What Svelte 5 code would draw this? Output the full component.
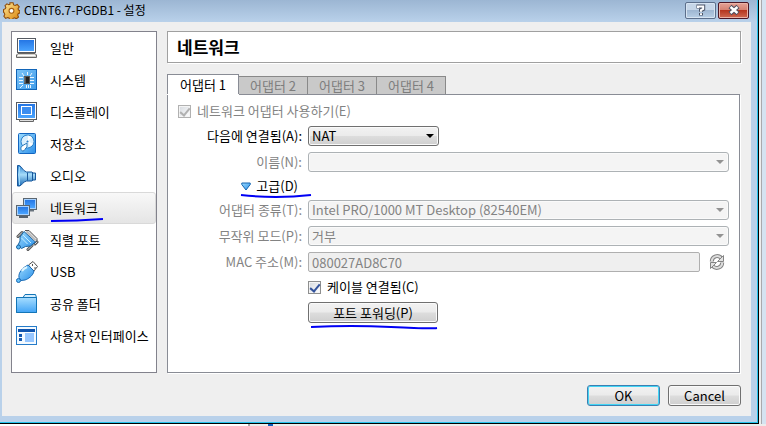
<script>
  const sections = [
    ['display', '일반'],
    ['chip', '시스템'],
    ['screen', '디스플레이'],
    ['disk', '저장소'],
    ['audio', '오디오'],
    ['network', '네트워크'],
    ['serial', '직렬 포트'],
    ['usb', 'USB'],
    ['folder', '공유 폴더'],
    ['ui', '사용자 인터페이스']
  ];
  const tabs = ['어댑터 1', '어댑터 2', '어댑터 3', '어댑터 4'];
  let current = $state('network');
  let activeTab = $state(0);
  let attached = $state('NAT');
  let cable = $state(true);
</script>

{#snippet icon(name)}
  <svg class="icon" viewBox="0 0 24 24" width="24" height="24" aria-hidden="true">
    {#if name === 'display'}
      <rect x="2.5" y="2.5" width="18" height="14" fill="#fff" stroke="#555a62" />
      <rect x="4" y="4" width="15" height="11" fill="url(#blue)" />
      <path d="M3 17.500h17l1.500 1.500v2.500h-20V19z" fill="#d4d2cc" stroke="#666" />
      <path d="M3 19.500h17" stroke="#fff" />
    {:else if name === 'chip'}
      <rect x="1.500" y="1.500" width="20" height="20" fill="url(#chip)" stroke="#1265b8" />
      <path d="M4 9.500h4M4 12.500h4M4 15.500h4M15 9.500h4M15 12.500h4M15 15.500h4M7 5l2 3M12.500 4v3M17 5l-2 3M8 17l-3 3M11.500 17v3M13.500 17v3M15.500 17v3" stroke="#eaf6ff" />
      <rect x="9.500" y="8.500" width="5" height="7" fill="#222" stroke="#555" />
      <path d="M10 9v6" stroke="#888" />
    {:else if name === 'screen'}
      <rect x="1.500" y="2.500" width="20" height="17" fill="#fff" stroke="#555a62" />
      <rect x="3" y="4" width="17" height="14" fill="url(#blue)" />
      <rect x="6.500" y="6.500" width="10" height="8" fill="#3b8df0" stroke="#fff" />
      <path d="M4.500 19.500h14v2h-14z" fill="#ddd" stroke="#666" />
    {:else if name === 'disk'}
      <rect x="3.500" y="1.500" width="17" height="20" rx="1" fill="url(#sky)" stroke="#1265c0" />
      <circle cx="12.500" cy="9.500" r="6.500" fill="#d9effd" stroke="#2c80c8" />
      <path d="M13 9V3.500l4 1.500zM13 9l5 3-3 2z" fill="#fff" />
      <circle cx="12.500" cy="9.500" r="1.500" fill="#2a80cc" stroke="#fff" />
      <path d="M12 11l-5 3c-2 2-1 5 1 5s2-3 4-4z" fill="#fff" stroke="#2577bb" />
    {:else if name === 'audio'}
      <path d="M2.500 1.500h2c3 2 3 5 7 6.500h5.500l1 1h2.500v7h-2.500l-1 1h-5.500c-4 1-4 4-7 5h-2z" fill="url(#cone)" stroke="#19589c" />
      <path d="M4.500 3v18" stroke="#9cd8fb" />
      <path d="M12.500 8.500v8M17.500 9v7" stroke="#19589c" />
    {:else if name === 'network'}
      <path d="M14 14.500h5" stroke="#68737d" stroke-width="2" />
      <rect x="8.500" y="2.500" width="13" height="11" fill="#a8d2ff" stroke="#5b6670" />
      <path d="M10 4h10v8H10z" fill="url(#blue)" />
      <rect x="1.500" y="9.500" width="13" height="10" fill="#a8d2ff" stroke="#5b6670" />
      <path d="M3 11h10v7H3z" fill="url(#blue)" />
      <path d="M4 21h9" stroke="#56616d" stroke-width="2" />
    {:else if name === 'serial'}
      <path d="M10 2.500h4l8 8v3" fill="#ddd" stroke="#555" />
      <path d="M3 8.500l4-4M13 21.500l4-4M20 16l2-2" stroke="#555" stroke-width="3" stroke-linecap="round" />
      <path d="M3 8.500l4-4M13 21.500l4-4M20 16l2-2" stroke="#ddd" stroke-linecap="round" />
      <path d="M9 3.500L20.500 14l-5 4-5 .5-4 2-3.500-3.500 2-4V9z" fill="url(#sky)" stroke="#19629e" />
      <path d="M8 7l8 8M6.500 10l6 6" stroke="#c6f0ff" />
      <path d="M11.500 3.500l9 9" stroke="#bbb" stroke-width="2" />
      <circle cx="3.500" cy="19" r="2" fill="#5ab8f6" stroke="#19629e" />
    {:else if name === 'usb'}
      <path d="M13.500 5l4.500-3.500 4.500 5-4 5z" fill="#fff" stroke="#505050" />
      <path d="M17.500 4v2M20 7v2" stroke="#555" />
      <path d="M13 5l6 6c-1 5-6 8-9 9l-4 .5-2-3c-1-5 4-10 9-12.500z" fill="url(#sky)" stroke="#1769b5" />
      <path d="M7 11c1-2 3-3 5-4" stroke="#e0f7ff" stroke-width="2" fill="none" />
      <circle cx="3.500" cy="20.500" r="2" fill="#63bff8" stroke="#1769b5" />
    {:else if name === 'folder'}
      <path d="M1.500 20.500v-15H8l2-3h10.500l1 3v15z" fill="#d5efff" stroke="#1375b7" />
      <path d="M2 6h19v14H2z" fill="url(#folder)" />
      <path d="M1.500 5.500h20v15h-20z" fill="none" stroke="#1375b7" />
    {:else}
      <rect x="1.500" y="2.500" width="20" height="18" fill="#f4faff" stroke="#257bc9" />
      <path d="M3 5h17v3H3z" fill="#0f54ae" />
      <path d="M4 10h3v3H4zM4 14h3v3H4z" fill="#1257b0" />
      <path d="M10 9h9v9h-9z" fill="#96c6ff" />
    {/if}
  </svg>
{/snippet}

{#snippet arrow()}
  <svg class="arrow" viewBox="0 0 8 4" width="8" height="4" aria-hidden="true"><path d="M0 0h8L4 4z" fill="currentColor" /></svg>
{/snippet}

<svg class="defs" width="0" height="0" aria-hidden="true">
  <defs>
    <linearGradient id="blue" x2="0" y2="1"><stop stop-color="#2576e4" /><stop offset="1" stop-color="#4aa4ff" /></linearGradient>
    <linearGradient id="sky" x2="1" y2="1"><stop stop-color="#9ddcff" /><stop offset="1" stop-color="#2b8fe8" /></linearGradient>
    <linearGradient id="chip" x2="1" y2="1"><stop stop-color="#7cc4f8" /><stop offset="1" stop-color="#3f9cea" /></linearGradient>
    <linearGradient id="cone" x2="0" y2="1"><stop stop-color="#2f86d2" /><stop offset=".45" stop-color="#a6dcfa" /><stop offset="1" stop-color="#1667b4" /></linearGradient>
    <linearGradient id="folder" x2="0" y2="1"><stop stop-color="#a4dcff" /><stop offset="1" stop-color="#45a6f6" /></linearGradient>
    <linearGradient id="gold" x2="1" y2="1"><stop stop-color="#ffe99a" /><stop offset="1" stop-color="#d98209" /></linearGradient>
  </defs>
</svg>

<div class="desktop">
  <div class="window">
    <header class="titlebar">
      <svg viewBox="0 0 16 16" width="17" height="17" aria-hidden="true">
        <path d="M6.500 .7h3l.5 2 1.400.6 2-1 1.900 2.200-1.100 1.700.3 1.200 1.400.8v2l-1.600.8-.5 1.300.8 1.800-2 1.700-1.800-.9-1.300.5-.6 1.300h-2.500l-.8-1.600-1.300-.5-1.800.8-1.700-2 .9-1.700-.5-1.400L.5 9.600V7.200l1.700-.9.5-1.200-.8-1.700 1.800-1.700 1.700.9 1.100-.4z" fill="url(#gold)" stroke="#8d4a0b" stroke-width="1" />
        <circle cx="8" cy="8.300" r="2.300" fill="#fff" stroke="#a55d10" />
      </svg>
      <h1>CENT6.7-PGDB1 - 설정</h1>
      <button class="caption" aria-label="도움말">
        <svg viewBox="0 0 12 12" width="12" height="12" aria-hidden="true">
          <path d="M3.500 4.500V2.500h4.700V5L6 6.200v1.600M6 9v2.500" fill="none" stroke="#4c5568" stroke-width="4" />
          <path d="M3 4V2.500h5.200V5L6 6.200v1.600M6 9.300v1.700" fill="none" stroke="#fff" stroke-width="2" />
        </svg>
      </button>
      <button class="caption close" aria-label="닫기">
        <svg viewBox="0 0 12 12" width="12" height="12" aria-hidden="true">
          <path d="M2 2.500l8 7M10 2.500l-8 7" stroke="#4e4f60" stroke-width="4.500" />
          <path d="M2.500 3l7 6M9.500 3l-7 6" stroke="#fff" stroke-width="2.400" />
        </svg>
      </button>
    </header>

    <main class="client">
      <nav class="sections">
        {#each sections as [id, label]}
          <button class="section" class:selected={current === id} onclick={() => (current = id)}>
            {@render icon(id)}
            <span class="marked">{label}
              {#if id === 'network'}
                <svg class="ink" viewBox="0 0 54 4" preserveAspectRatio="none" aria-hidden="true"><path d="M1 3Q27 3 53 1" /></svg>
              {/if}
            </span>
          </button>
        {/each}
      </nav>

      <div class="content">
        <h2>네트워크</h2>
        <div class="tabs" role="tablist">
          {#each tabs as tab, i}
            <button class="tab" role="tab" aria-selected={activeTab === i} onclick={() => (activeTab = i)}>{tab}</button>
          {/each}
        </div>
        <form class="page">
          <label class="check off wide"><input type="checkbox" checked disabled />네트워크 어댑터 사용하기(E)</label>

          <label class="name" for="attached">다음에 연결됨(A):</label>
          <div class="combo short">
            <select id="attached" bind:value={attached}><option>NAT</option></select>
            {@render arrow()}
          </div>

          <label class="name off" for="name">이름(N):</label>
          <div class="combo"><select id="name" disabled><option></option></select>{@render arrow()}</div>

          <button type="button" class="advanced marked">
            <svg viewBox="0 0 10 9" width="10" height="9" aria-hidden="true"><path d="M.8 1h8.400v1.500L5 8 .8 2.500z" fill="url(#sky)" stroke="#1464b0" /></svg>
            고급(D)
            <svg class="ink" viewBox="0 0 70 4" preserveAspectRatio="none" aria-hidden="true"><path d="M0 1Q35 5 70 1" /></svg>
          </button>

          <label class="name off" for="type">어댑터 종류(T):</label>
          <div class="combo"><select id="type" disabled><option>Intel PRO/1000 MT Desktop (82540EM)</option></select>{@render arrow()}</div>

          <label class="name off" for="promisc">무작위 모드(P):</label>
          <div class="combo"><select id="promisc" disabled><option>거부</option></select>{@render arrow()}</div>

          <label class="name off" for="mac">MAC 주소(M):</label>
          <div class="mac">
            <input id="mac" type="text" value="080027AD8C70" disabled />
            <button type="button" disabled aria-label="새로 고침">
              <svg viewBox="0 0 16 16" width="16" height="16" fill="none" aria-hidden="true">
                <path d="M2.800 7.500A5.300 5.300 0 0 1 12.500 4.500M13.200 8.500A5.300 5.300 0 0 1 3.500 11.500" stroke="#858585" stroke-width="4" />
                <path d="M2.800 7.500A5.300 5.300 0 0 1 12.500 4.500M13.200 8.500A5.300 5.300 0 0 1 3.500 11.500" stroke="#ddd" stroke-width="2" />
                <path d="M14.500 1.500v6H8.500zM1.500 14.500v-6h6z" fill="#e2e2e2" stroke="#858585" />
              </svg>
            </button>
          </div>

          <label class="check second"><input type="checkbox" bind:checked={cable} />케이블 연결됨(C)</label>

          <button type="button" class="push forward marked">포트 포워딩(P)
            <svg class="ink" viewBox="0 0 126 4" preserveAspectRatio="none" aria-hidden="true"><path d="M0 2Q40 0 80 2T126 3" /></svg>
          </button>
        </form>
      </div>

      <footer>
        <button class="push default">OK</button>
        <button class="push">Cancel</button>
      </footer>
    </main>
  </div>
  <div class="behind-right"></div>
  <div class="behind-bottom"></div>
</div>

<style>
  :global(body) { margin: 0; }
  .desktop, .desktop * { box-sizing: border-box; }
  .desktop {
    display: grid;
    grid-template: 1fr 2px / 1fr 7px;
    min-height: 100vh;
    overflow: hidden;
    color: #000;
    font: 13px/16px "Noto Sans CJK KR", sans-serif;
  }
  .defs { position: absolute; }
  button, select, input { font: inherit; color: inherit; margin: 0; }
  button { padding: 0; white-space: nowrap; }
  h1, h2 { margin: 0; }
  svg { flex: none; }

  .window {
    display: flex;
    flex-direction: column;
    padding: 0 7px 7px 2px;
    background: #b9d1ea;
    border: solid #000;
    border-width: 0 1px 1px 0;
    box-shadow: inset -1px -1px #25c4ee;
  }
  .titlebar {
    display: flex;
    align-items: center;
    gap: 2px;
    height: 22px;
    margin: 0 -6px 0 -2px;
    padding: 0 8px 2px 3px;
    background: linear-gradient(#9cb6d3, #b9d1ea);
  }
  h1 { flex: 1; padding-left: 2px; font-size: 12px; font-weight: 400; }
  .caption {
    display: grid;
    place-items: center;
    width: 31px;
    height: 17px;
    border: 1px solid #5c6f8b;
    border-radius: 2px;
    background: linear-gradient(#c6d6e8 45%, #9fb7d2 50%, #b8cfe6);
    box-shadow: inset 0 0 0 1px #d7e4f2;
  }
  .close {
    border-color: #4c1625;
    background: linear-gradient(#e5a296, #d68272 45%, #b6361f 50%, #cf6a52);
    box-shadow: inset 0 0 0 1px #eab2a6;
  }

  .client {
    flex: 1;
    display: grid;
    grid-template: 1fr auto / 146px minmax(0, 1fr);
    gap: 12px 10px;
    padding: 9px 10px 10px 9px;
    background: #efefef;
  }
  .sections {
    display: flex;
    flex-direction: column;
    background: #fff;
    border: 1px solid #82828c;
  }
  .section {
    display: flex;
    align-items: center;
    gap: 11px;
    height: 32px;
    padding: 0 2px;
    border: 1px solid transparent;
    border-radius: 3px;
    background: none;
    text-align: left;
  }
  .section.selected { border-color: #d9d9d9; background: linear-gradient(#f8f8f8, #e5e5e5); }
  .marked { position: relative; }
  .ink {
    position: absolute;
    left: 0;
    top: 100%;
    width: 54px;
    height: 4px;
    fill: none;
    stroke: #0000f5;
    stroke-width: 2px;
    overflow: visible;
  }
  .section .ink { top: 18px; }

  .content { display: flex; flex-direction: column; min-width: 0; }
  h2 {
    height: 32px;
    padding: 0 9px;
    border: 1px solid #a0a0a0;
    background: #fff;
    box-shadow: 1px 1px #fff;
    font-size: 17px;
    line-height: 30px;
    font-weight: 700;
  }
  .tabs { display: flex; align-items: flex-end; height: 20px; margin-top: 11px; }
  .tab {
    height: 18px;
    padding: 0 11px;
    border: 1px solid #898989;
    border-bottom: 0;
    margin-left: -1px;
    background: #c9c9c9;
    color: #7d7d7d;
    line-height: 15px;
  }
  .tab[aria-selected='true'] {
    position: relative;
    height: 20px;
    padding: 0 12px;
    margin: 0;
    border-color: #898c95;
    background: #fff;
    color: #000;
    line-height: 17px;
    box-shadow: 0 1px #fff;
  }
  .page {
    flex: 1;
    display: grid;
    grid-template-columns: 124px minmax(0, 1fr);
    gap: 6px;
    align-content: start;
    padding: 7px 10px 10px;
    margin-right: 1px;
    border: 1px solid #898c95;
    background: #fff;
    box-shadow: 1px 1px #fff;
  }
  .name {
    grid-column: 1;
    display: flex;
    align-items: center;
    justify-content: flex-end;
    white-space: nowrap;
  }
  .off { color: #838383; }
  .check { display: flex; align-items: center; gap: 6px; height: 18px; }
  .wide { grid-column: 1 / -1; }
  .second, .forward { grid-column: 2; justify-self: start; }
  input[type='checkbox'] {
    appearance: none;
    width: 13px;
    height: 13px;
    border: 1px solid #8e8f8f;
    background: linear-gradient(135deg, #d5d9de, #fff);
    box-shadow: inset 0 0 0 1px #f4f4f4;
    display: grid;
    place-items: center;
  }
  input[type='checkbox']:checked::before {
    content: '';
    width: 4px;
    height: 8px;
    border: solid #33539c;
    border-width: 0 2px 2px 0;
    transform: rotate(40deg);
  }
  input[type='checkbox']:disabled { border-color: #b1b1b1; }
  input[type='checkbox']:disabled::before { border-color: #b1b1b1; }

  .combo { position: relative; height: 20px; color: #000; }
  .short { width: 131px; }
  select {
    appearance: none;
    display: block;
    width: 100%;
    height: 100%;
    padding: 0 20px 0 3px;
    border: 1px solid #707070;
    border-radius: 3px;
    background: linear-gradient(#f2f2f2, #ebebeb 48%, #ddd 52%, #cfcfcf);
    box-shadow: inset 0 0 0 1px #fafafa;
    line-height: 16px;
  }
  select:disabled { border-color: #adb2b5; background: #f4f4f4; color: #838383; opacity: 1; }
  .arrow { position: absolute; right: 5px; top: 8px; pointer-events: none; }
  select:disabled + .arrow { color: #929292; }
  .advanced {
    display: flex;
    align-items: center;
    justify-self: end;
    gap: 5px;
    height: 16px;
    margin-right: 4px;
    grid-column: 1;
    border: 0;
    background: none;
  }
  .advanced .ink { width: 70px; }
  .mac { display: flex; align-items: center; gap: 9px; height: 20px; padding-right: 4px; }
  .mac input {
    flex: 1;
    min-width: 0;
    height: 20px;
    padding: 0 3px;
    border: 1px solid #afafaf;
    border-radius: 2px;
    background: #efefef;
    color: #838383;
  }
  .mac button { display: flex; border: 0; background: none; }

  .push {
    width: 73px;
    height: 21px;
    border: 1px solid #707070;
    border-radius: 3px;
    background: linear-gradient(#f2f2f2, #ebebeb 48%, #ddd 52%, #cfcfcf);
    box-shadow: inset 0 0 0 1px #fafafa;
    line-height: 17px;
  }
  .default { border-color: #3c7fb1; box-shadow: inset 0 0 0 1px #42d5f5; }
  .forward { width: 130px; }
  .forward .ink { left: 2px; top: 22px; width: 126px; }
  footer { grid-column: 2; display: flex; justify-content: flex-end; gap: 8px; }

  .behind-right {
    background: linear-gradient(90deg, #ededed 2px, #a9a9ad 2px, #a9a9ad 3px, #d5e3f1 3px);
  }
  .behind-bottom {
    grid-column: 1 / -1;
    background: linear-gradient(90deg, #fff 248px, #aaa 248px, #aaa 250px, #ededed 250px, #ededed 268px, #1060c0 268px, #1060c0 273px, #ededed 273px);
  }
</style>
